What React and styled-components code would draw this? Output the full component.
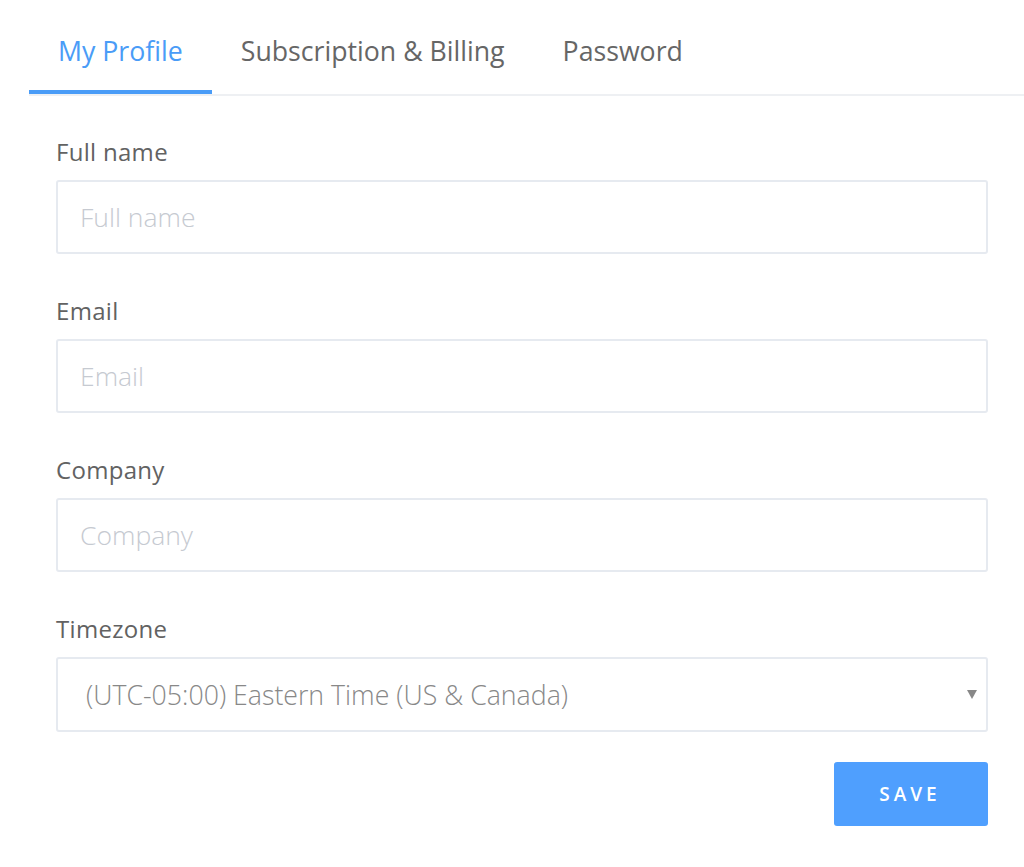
import React from 'react'
import styled, { createGlobalStyle } from "styled-components";

const GlobalStyle = createGlobalStyle`
  body {
    margin: 0;
    background: #fff;
    font-family: "Open Sans", "Noto Sans", sans-serif;
  }
`

const Page = styled.div`
  padding-left: 29px;
  min-height: 867px;
  box-sizing: border-box;
`

const TabBar = styled.div`
  display: flex;
  border-bottom: 2px solid #eef0f3;
`

const Tab = styled.div`
  padding: 33px 29px 21px;
  font-size: 26.7px;
  line-height: 36px;
  color: ${(p) => (p.active ? "#4a9cf7" : "#666")};
  border-bottom: 4px solid ${(p) => (p.active ? "#4a9cf7" : "transparent")};
  cursor: pointer;
`

const Form = styled.form`
  padding: 40px 36px 0 27px;
  display: flex;
  flex-direction: column;
`

const Field = styled.div`
  display: flex;
  flex-direction: column;
  & + & {
    margin-top: 41px;
  }
`

const Label = styled.label`
  font-size: 24px;
  line-height: 32px;
  letter-spacing: 0.3px;
  color: #626262;
  margin-bottom: 12px;
`

const Input = styled.input`
  height: 74px;
  box-sizing: border-box;
  border: 2px solid #e6eaf0;
  border-radius: 3px;
  padding: 0 22px;
  font-family: inherit;
  font-size: 26.5px;
  font-weight: 300;
  color: #555;
  outline: none;
  &::placeholder {
    color: #c6cad1;
  }
`

const SelectWrap = styled.div`
  position: relative;
`

const Select = styled.select`
  width: 100%;
  height: 75px;
  box-sizing: border-box;
  border: 2px solid #e6eaf0;
  border-radius: 3px;
  padding: 0 28px;
  font-family: inherit;
  font-size: 26.7px;
  font-weight: 300;
  color: #888;
  background: #fff;
  appearance: none;
  outline: none;
`

const Arrow = styled.span`
  position: absolute;
  right: 11px;
  top: 33px;
  width: 0;
  height: 0;
  border-left: 5px solid transparent;
  border-right: 5px solid transparent;
  border-top: 9px solid #888;
  pointer-events: none;
`

const Actions = styled.div`
  display: flex;
  justify-content: flex-end;
  margin-top: 30px;
`

const SaveBtn = styled.button`
  width: 154px;
  height: 64px;
  border: none;
  border-radius: 3px;
  background-color: #4f9ffe;
  color: #fff;
  font-family: inherit;
  font-size: 19px;
  font-weight: 600;
  letter-spacing: 4px;
  padding-left: 4px;
  cursor: pointer;
`

const tabs = ["My Profile", "Subscription & Billing", "Password"]

export default function App() {
  return (
    <Page>
      <GlobalStyle />
      <TabBar>
        {tabs.map((t, i) => (
          <Tab key={t} active={i === 0}>{t}</Tab>
        ))}
      </TabBar>
      <Form onSubmit={(e) => e.preventDefault()}>
        <Field>
          <Label>Full name</Label>
          <Input placeholder="Full name" />
        </Field>
        <Field>
          <Label>Email</Label>
          <Input placeholder="Email" />
        </Field>
        <Field>
          <Label>Company</Label>
          <Input placeholder="Company" />
        </Field>
        <Field>
          <Label>Timezone</Label>
          <SelectWrap>
            <Select defaultValue="est">
              <option value="est">(UTC-05:00) Eastern Time (US &amp; Canada)</option>
            </Select>
            <Arrow />
          </SelectWrap>
        </Field>
        <Actions>
          <SaveBtn type="submit">SAVE</SaveBtn>
        </Actions>
      </Form>
    </Page>
  )
}
